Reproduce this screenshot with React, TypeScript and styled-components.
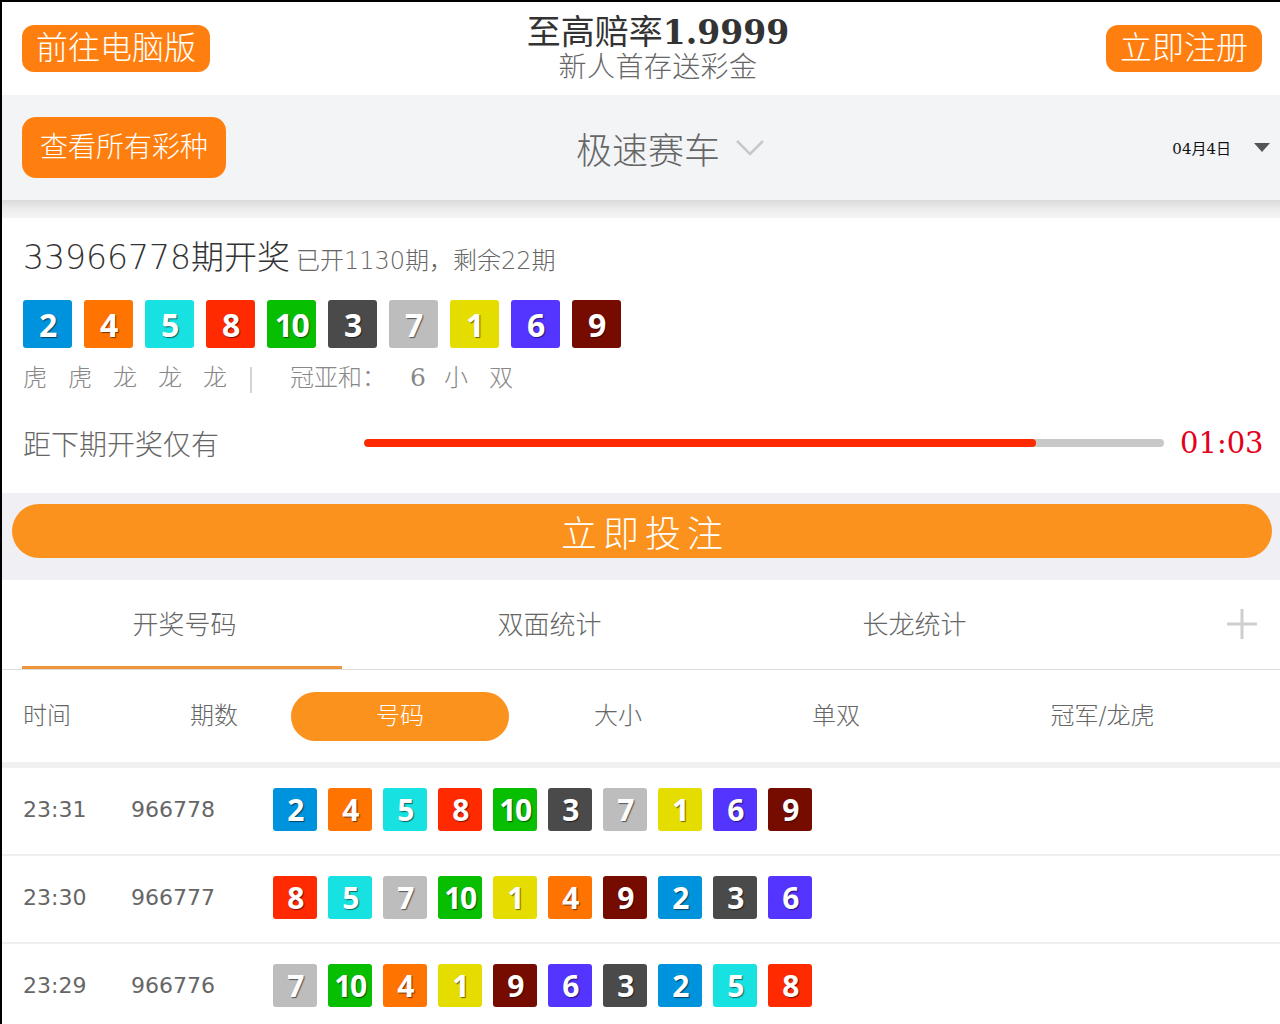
import React from 'react';
import styled, { createGlobalStyle } from 'styled-components';

const SANS = `"DejaVu Sans", "Noto Sans CJK SC", sans-serif`;
const SERIF = `"DejaVu Serif", "Noto Sans CJK SC", serif`;
const BALLFONT = `"Open Sans", "DejaVu Sans", sans-serif`;

const Global = createGlobalStyle`
  html, body { margin: 0; padding: 0; background: #fff; }
  body { font-family: ${SANS}; font-weight: 300; }
  * { box-sizing: border-box; }
`;

const BALL_COLORS: Record<number, string> = {
  1: '#e6dd00',
  2: '#0093dd',
  3: '#4a4a4a',
  4: '#ff7400',
  5: '#18e1e1',
  6: '#5434ff',
  7: '#bdbdbd',
  8: '#ff2a00',
  9: '#760c00',
  10: '#08be00',
};

const Page = styled.div`
  width: 1280px;
  height: 1024px;
  overflow: hidden;
  border-top: 2px solid #000;
  border-left: 2px solid #000;
  background: #fff;
`;

const Header = styled.header`
  height: 93px;
  display: flex;
  align-items: center;
  padding: 0 18px 0 20px;
  background: #fff;
`;

const OrangeButton = styled.div<{ $h: number; $size: number; $pad: number; $radius: number }>`
  height: ${(p) => p.$h}px;
  line-height: ${(p) => p.$h}px;
  padding: 0 ${(p) => p.$pad}px;
  font-size: ${(p) => p.$size}px;
  border-radius: ${(p) => p.$radius}px;
  background: #fe7f10;
  color: #fff;
  white-space: nowrap;
  font-weight: 300;
`;

const TitleBlock = styled.div`
  flex: 1;
  text-align: center;
`;

const Title = styled.div`
  height: 37px;
  font-size: 34px;
  line-height: 37px;
  color: #333;
  font-weight: 400;
`;

const TitleNum = styled.span`
  font-family: ${SERIF};
  font-weight: 700;
  font-size: 33px;
`;

const Subtitle = styled.div`
  font-size: 28px;
  line-height: 32px;
  color: #666;
  margin-top: 1px;
  letter-spacing: 0.4px;
`;

const SubBar = styled.div`
  height: 105px;
  background: #f3f4f6;
  display: flex;
  align-items: center;
  padding-left: 20px;
`;

const GameSelect = styled.div`
  flex: 1;
  display: flex;
  justify-content: center;
  align-items: center;
  gap: 15px;
  font-size: 36px;
  color: #666;
`;

const DateBlock = styled.div`
  width: 165px;
  display: flex;
  align-items: center;
  justify-content: flex-end;
  gap: 23px;
  padding-right: 10px;
  font-family: ${SERIF};
  font-size: 15px;
  color: #111;
  font-weight: 400;
`;

const Triangle = styled.span`
  width: 0;
  height: 0;
  border-left: 8.5px solid transparent;
  border-right: 8.5px solid transparent;
  border-top: 9px solid #555;
`;

const ShadowBand = styled.div`
  height: 18px;
  background: linear-gradient(#dadada, #ebebeb 45%, #f4f4f4);
`;

const ResultPanel = styled.section`
  padding: 18px 0 25px 21px;
  background: #fff;
`;

const DrawTitle = styled.div`
  height: 44px;
  font-size: 33px;
  line-height: 44px;
  color: #333;
  white-space: nowrap;
`;

const DrawMeta = styled.span`
  font-size: 24px;
  color: #666;
  margin-left: 6px;
`;

const BallRow = styled.div<{ $gap: number }>`
  display: flex;
  gap: ${(p) => p.$gap}px;
`;

const TopBalls = styled(BallRow)`
  margin-top: 20px;
`;

const Ball = styled.div<{ $w: number; $h: number; $size: number }>`
  width: ${(p) => p.$w}px;
  height: ${(p) => p.$h}px;
  border-radius: 3px;
  display: flex;
  align-items: center;
  justify-content: center;
  color: #fff;
  font-family: ${BALLFONT};
  font-weight: 700;
  font-size: ${(p) => p.$size}px;
  letter-spacing: -1.5px;
  text-shadow: 1px 1px 1px rgba(0, 0, 0, 0.55);
`;

const TagRow = styled.div`
  margin-top: 13px;
  height: 34px;
  display: flex;
  align-items: center;
  font-size: 24px;
  line-height: 34px;
  color: #888;
`;

const Tag = styled.span<{ $ml?: number }>`
  margin-left: ${(p) => p.$ml ?? 0}px;
`;

const TagNum = styled(Tag)`
  font-family: ${SERIF};
  font-size: 25px;
`;

const TagDivider = styled.span`
  width: 2px;
  height: 26px;
  background: #d4d4d4;
  margin: 4px 0 0 23px;
`;

const Countdown = styled.div`
  margin-top: 23px;
  height: 50px;
  display: flex;
  align-items: center;
`;

const CountLabel = styled.div`
  width: 341px;
  font-size: 28px;
  color: #666;
`;

const Track = styled.div`
  width: 800px;
  height: 8px;
  border-radius: 4px;
  background: #c8c8c8;
  overflow: hidden;
`;

const Fill = styled.div`
  height: 100%;
  border-radius: 4px;
  background: #ff2a00;
`;

const Timer = styled.div`
  margin-left: 16px;
  font-family: ${SERIF};
  font-size: 29px;
  font-weight: 400;
  color: #e3001b;
`;

const BetZone = styled.div`
  background: #efeff4;
  padding: 11px 8px 22px 10px;
`;

const BetButton = styled.div`
  height: 54px;
  border-radius: 27px;
  background: #fb921e;
  color: #fff;
  font-size: 36px;
  letter-spacing: 6px;
  padding-left: 6px;
  display: flex;
  align-items: center;
  justify-content: center;
`;

const Tabs = styled.nav`
  height: 90px;
  display: flex;
  border-bottom: 1px solid #dcdcdc;
`;

const Tab = styled.div<{ $active?: boolean }>`
  width: 365px;
  height: 89px;
  line-height: 90px;
  text-align: center;
  font-size: 26px;
  color: #666;
  position: relative;
  &::after {
    content: '';
    display: ${(p) => (p.$active ? 'block' : 'none')};
    position: absolute;
    left: 20px;
    width: 320px;
    bottom: 0;
    height: 3px;
    background: #f0963a;
  }
`;

const PlusArea = styled.div`
  flex: 1;
  display: flex;
  align-items: center;
  justify-content: flex-end;
  padding: 0 22px 2px 0;
`;

const ListHead = styled.div`
  height: 92px;
  display: grid;
  grid-template-columns: 127px 141px 218px 218px 218px 1fr;
  align-items: center;
  padding: 0 20px 0 21px;
  font-size: 24px;
  line-height: 30px;
  color: #666;
`;

const HeadCell = styled.div<{ $align?: string; $pr?: number }>`
  text-align: ${(p) => p.$align ?? 'center'};
  padding-right: ${(p) => p.$pr ?? 0}px;
`;

const Pill = styled.div`
  height: 49px;
  border-radius: 25px;
  background: #fb921e;
  color: #fff;
  display: flex;
  align-items: center;
  justify-content: center;
`;

const Strip = styled.div`
  height: 6px;
  background: #f0f0f0;
`;

const Row = styled.div`
  height: 88px;
  display: flex;
  align-items: center;
  padding: 0 0 3px 21px;
  border-bottom: 2px solid #eeeeee;
  font-size: 22px;
  color: #666;
  font-weight: 400;
`;

const TimeCell = styled.div`
  width: 108px;
`;

const PeriodCell = styled.div`
  width: 142px;
`;

const topBalls = [2, 4, 5, 8, 10, 3, 7, 1, 6, 9];

const rows = [
  { time: '23:31', period: '966778', balls: [2, 4, 5, 8, 10, 3, 7, 1, 6, 9] },
  { time: '23:30', period: '966777', balls: [8, 5, 7, 10, 1, 4, 9, 2, 3, 6] },
  { time: '23:29', period: '966776', balls: [7, 10, 4, 1, 9, 6, 3, 2, 5, 8] },
];

const Chevron = () => (
  <svg width="30" height="18" viewBox="0 0 30 18">
    <polyline points="2,2 15,15 28,2" fill="none" stroke="#c8c8c8" strokeWidth="2.5" />
  </svg>
);

const Plus = () => (
  <svg width="32" height="32" viewBox="0 0 32 32">
    <line x1="16" y1="1" x2="16" y2="31" stroke="#cfcfcf" strokeWidth="3" />
    <line x1="1" y1="16" x2="31" y2="16" stroke="#cfcfcf" strokeWidth="3" />
  </svg>
);

export default function App() {
  return (
    <>
      <Global />
      <Page>
        <Header>
          <OrangeButton $h={47} $size={32} $pad={14} $radius={12}>前往电脑版</OrangeButton>
          <TitleBlock>
            <Title>
              至高赔率<TitleNum>1.9999</TitleNum>
            </Title>
            <Subtitle>新人首存送彩金</Subtitle>
          </TitleBlock>
          <OrangeButton $h={47} $size={32} $pad={14} $radius={12}>立即注册</OrangeButton>
        </Header>

        <SubBar>
          <OrangeButton $h={61} $size={28} $pad={18} $radius={14}>查看所有彩种</OrangeButton>
          <GameSelect>
            <span>极速赛车</span>
            <Chevron />
          </GameSelect>
          <DateBlock>
            <span>04月4日</span>
            <Triangle />
          </DateBlock>
        </SubBar>
        <ShadowBand />

        <ResultPanel>
          <DrawTitle>
            33966778期开奖<DrawMeta>已开1130期，剩余22期</DrawMeta>
          </DrawTitle>
          <TopBalls $gap={12}>
            {topBalls.map((n, i) => (
              <Ball key={i} $w={49} $h={48} $size={32} style={{ background: BALL_COLORS[n] }}>
                {n}
              </Ball>
            ))}
          </TopBalls>
          <TagRow>
            <Tag>虎</Tag>
            <Tag $ml={21}>虎</Tag>
            <Tag $ml={21}>龙</Tag>
            <Tag $ml={21}>龙</Tag>
            <Tag $ml={21}>龙</Tag>
            <TagDivider />
            <Tag $ml={38}>冠亚和：</Tag>
            <TagNum $ml={24}>6</TagNum>
            <Tag $ml={18}>小</Tag>
            <Tag $ml={21}>双</Tag>
          </TagRow>
          <Countdown>
            <CountLabel>距下期开奖仅有</CountLabel>
            <Track>
              <Fill style={{ width: '84%' }} />
            </Track>
            <Timer>01:03</Timer>
          </Countdown>
        </ResultPanel>

        <BetZone>
          <BetButton>立即投注</BetButton>
        </BetZone>

        <Tabs>
          <Tab $active>开奖号码</Tab>
          <Tab>双面统计</Tab>
          <Tab>长龙统计</Tab>
          <PlusArea>
            <Plus />
          </PlusArea>
        </Tabs>

        <ListHead>
          <HeadCell $align="left">时间</HeadCell>
          <HeadCell $pr={13}>期数</HeadCell>
          <Pill>号码</Pill>
          <HeadCell>大小</HeadCell>
          <HeadCell>单双</HeadCell>
          <HeadCell>冠军/龙虎</HeadCell>
        </ListHead>
        <Strip />

        {rows.map((r) => (
          <Row key={r.period}>
            <TimeCell>{r.time}</TimeCell>
            <PeriodCell>{r.period}</PeriodCell>
            <BallRow $gap={11}>
              {r.balls.map((n, i) => (
                <Ball key={i} $w={44} $h={43} $size={30} style={{ background: BALL_COLORS[n] }}>
                  {n}
                </Ball>
              ))}
            </BallRow>
          </Row>
        ))}
      </Page>
    </>
  );
}
